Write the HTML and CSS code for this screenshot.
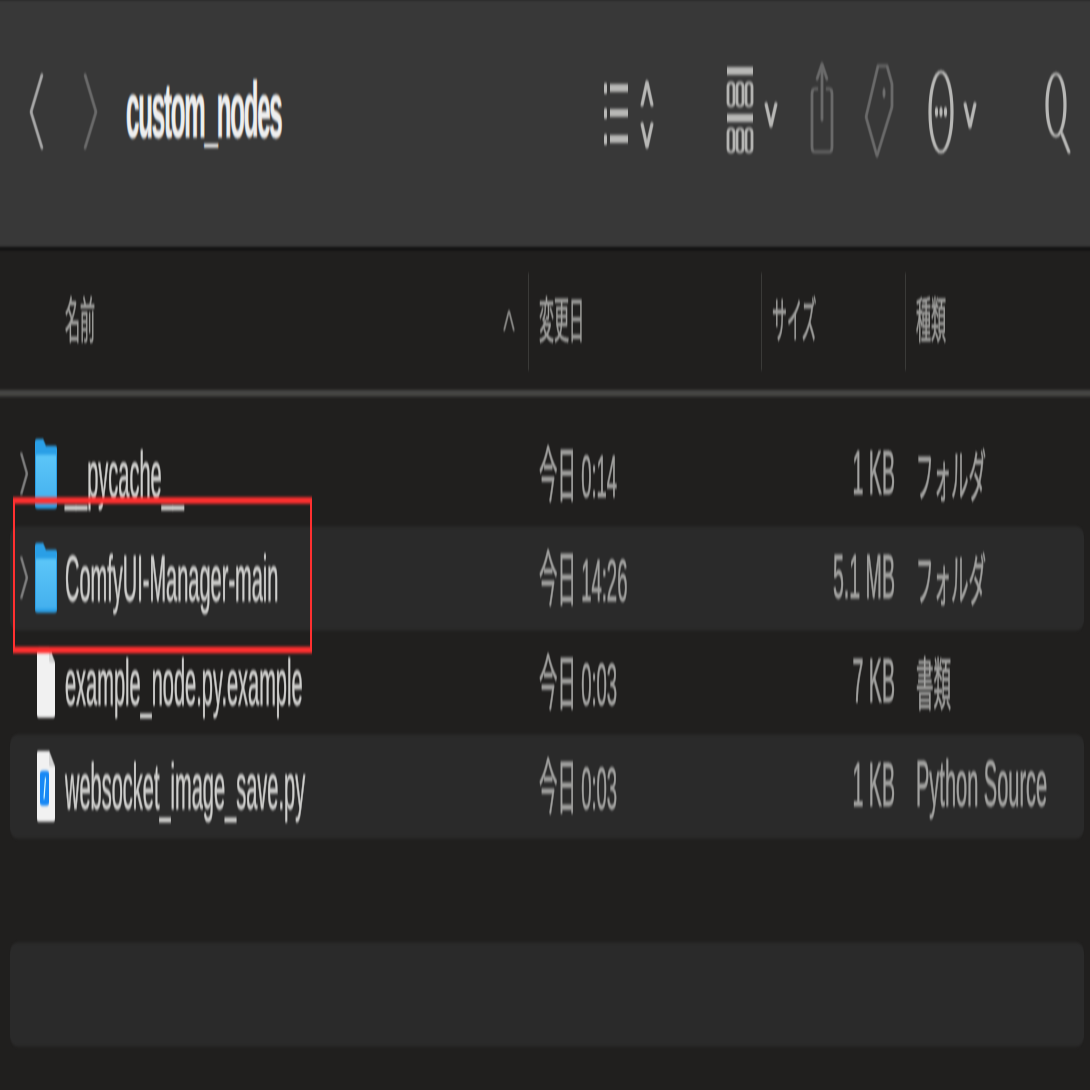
FILE: index.html
```html
<!DOCTYPE html>
<html lang="ja">
<head>
<meta charset="utf-8">
<title>custom_nodes</title>
<link rel="stylesheet" href="styles.css">
</head>
<body>
<main class="stage">
  <header class="toolbar">
    <svg class="tb tb-nav" viewBox="24 0 80 249" preserveAspectRatio="none"><polyline class="s-mid" points="42,75 31,112 42,148"/><polyline class="s-dim" points="85,75 96,112 85,148"/></svg>
    <h1 class="title">custom_nodes</h1>
    <svg class="tb tb-list" viewBox="602 0 54 249" preserveAspectRatio="none">
      <g class="f-light"><rect x="604" y="83" width="3" height="11" rx="1.5"/><rect x="604" y="108" width="3" height="11" rx="1.5"/><rect x="604" y="134" width="3" height="11" rx="1.5"/><rect x="610" y="84" width="18" height="8"/><rect x="610" y="109" width="18" height="8"/><rect x="610" y="135" width="18" height="8"/></g>
      <polyline class="s-light" points="642,105 647,82 652,105"/><polyline class="s-light" points="642,124 647,147 652,124"/>
    </svg>
    <svg class="tb tb-gallery" viewBox="724 0 56 249" preserveAspectRatio="none">
      <g class="f-light"><rect x="727" y="67" width="26" height="8"/><rect x="727" y="114" width="26" height="8"/></g>
      <g class="s-thin"><rect x="728" y="83" width="6" height="23" rx="3"/><rect x="737" y="83" width="6" height="23" rx="3"/><rect x="746" y="83" width="6" height="23" rx="3"/><rect x="728" y="129" width="6" height="23" rx="3"/><rect x="737" y="129" width="6" height="23" rx="3"/><rect x="746" y="129" width="6" height="23" rx="3"/></g>
      <polyline class="s-light" points="766,104 771,126 776,104"/>
    </svg>
    <svg class="tb tb-share" viewBox="808 0 28 249" preserveAspectRatio="none"><path class="s-dim" d="M817 89h-2q-3 0-3 5v53q0 5 3 5h14q3 0 3-5V94q0-5-3-5h-2"/><path class="s-dim" d="M822 120V64M817 79l5-15 5 15"/></svg>
    <svg class="tb tb-tag" viewBox="862 0 34 249" preserveAspectRatio="none"><path class="s-dim" d="M878 66h9l5 18v23l-15 49-11-39z"/><ellipse class="f-dim" cx="884" cy="93" rx="1.5" ry="5"/></svg>
    <svg class="tb tb-more" viewBox="926 0 54 249" preserveAspectRatio="none">
      <ellipse class="s-light" cx="941" cy="112" rx="11" ry="40"/>
      <g class="f-light"><ellipse cx="936.5" cy="112" rx="1.6" ry="5"/><ellipse cx="941" cy="112" rx="1.6" ry="5"/><ellipse cx="945.5" cy="112" rx="1.6" ry="5"/></g>
      <polyline class="s-light" points="965,104 970,127 975,104"/>
    </svg>
    <svg class="tb tb-search" viewBox="1042 0 30 249" preserveAspectRatio="none"><ellipse class="s-light" cx="1056" cy="105" rx="9" ry="31"/><path class="s-light" d="M1062 134l7 18"/></svg>
  </header>

  <div class="columns">
    <div class="col col-name"><span class="label">名前</span><svg class="sort" viewBox="0 0 12 24" preserveAspectRatio="none"><polyline points="1,22 6,2 11,22"/></svg></div>
    <div class="col col-date"><span class="label">変更日</span></div>
    <div class="col col-size"><span class="label">サイズ</span></div>
    <div class="col col-kind"><span class="label">種類</span></div>
  </div>

  <section class="list">
    <div class="row">
      <svg class="disc" viewBox="0 0 8 44" preserveAspectRatio="none"><polyline points="1,1 7,22 1,43"/></svg>
      <svg class="folder" viewBox="0 0 22 70" preserveAspectRatio="none"><use href="#folder-icon"/></svg>
      <span class="name">__pycache__</span><span class="date">今日 0:14</span><span class="size">1 KB</span><span class="kind jp">フォルダ</span>
    </div>
    <div class="row stripe">
      <svg class="disc" viewBox="0 0 8 44" preserveAspectRatio="none"><polyline points="1,1 7,22 1,43"/></svg>
      <svg class="folder" viewBox="0 0 22 70" preserveAspectRatio="none"><use href="#folder-icon"/></svg>
      <span class="name">ComfyUI-Manager-main</span><span class="date">今日 14:26</span><span class="size">5.1 MB</span><span class="kind jp">フォルダ</span>
    </div>
    <div class="row">
      <i></i>
      <svg class="file" viewBox="0 0 20 72" preserveAspectRatio="none"><use href="#file-icon"/></svg>
      <span class="name">example_node.py.example</span><span class="date">今日 0:03</span><span class="size">7 KB</span><span class="kind jp">書類</span>
    </div>
    <div class="row stripe">
      <i></i>
      <svg class="file" viewBox="0 0 20 72" preserveAspectRatio="none"><use href="#file-icon"/><rect x="4" y="20" width="9" height="35" rx="3" fill="#1788f5"/><path d="M9.5 27l-1.5 21" stroke="#dff" stroke-width="1.2"/></svg>
      <span class="name">websocket_image_save.py</span><span class="date">今日 0:03</span><span class="size">1 KB</span><span class="kind">Python Source</span>
    </div>
    <div class="row"></div>
    <div class="row stripe"></div>
  </section>

  <div class="callout"></div>

  <svg class="defs" aria-hidden="true">
    <defs>
      <linearGradient id="folder-fill" x1="0" y1="0" x2="0" y2="1"><stop offset="0" stop-color="#5cc6f8"/><stop offset="1" stop-color="#44b0ee"/></linearGradient>
      <g id="folder-icon">
        <path d="M0 3q0-3 3-3h5l3 7h9q2 0 2 3v57q0 3-3 3H3q-3 0-3-3z" fill="#2a9fe6"/>
        <rect x="1" y="16" width="20" height="50" rx="1" fill="url(#folder-fill)"/>
      </g>
      <g id="file-icon">
        <path d="M1 2q0-2 2-2h10l6 16v52q0 3-2 3H3q-2 0-2-3z" fill="#f1f1f1"/>
        <path d="M13 0v14q0 2 2 2h4z" fill="#d4d4d4"/>
      </g>
    </defs>
  </svg>
</main>
</body>
</html>
```
FILE: styles.css
```css
html, body { margin: 0; height: 100%; overflow: hidden; background: #201f1e; }
body { font-family: "Liberation Sans", "Noto Sans CJK JP", sans-serif; }

/* The source picture is stretched vertically: everything is laid out
   at 1/3.25 height and stretched back up. */
.stage {
  position: relative;
  width: 1090px;
  height: 336px;
  transform: scale(1, 3.25);
  transform-origin: 0 0;
  color: #cfcfcf;
  font-size: 20px;
  filter: blur(0.45px);
  -webkit-text-stroke: 0.25px currentColor;
}

.toolbar {
  display: flex;
  align-items: center;
  height: 76px;
  padding-left: 24px;
  background: #383838;
  border-bottom: 1px solid #0c0c0c;
}
.tb { height: 76.6px; flex: none; align-self: flex-start; overflow: visible; }
.tb-nav { width: 80px; }
.tb-list { width: 54px; margin-left: 202px; }
.tb-gallery { width: 56px; margin-left: 68px; }
.tb-share { width: 28px; margin-left: 28px; }
.tb-tag { width: 34px; margin-left: 26px; }
.tb-more { width: 54px; margin-left: 30px; }
.tb-search { width: 30px; margin-left: 62px; }

.title {
  width: 274px;
  margin: 0 0 8px 22px;
  font-size: 24px;
  font-weight: 700;
  letter-spacing: -1.15px;
  color: #eeeeee;
  flex: none;
}

.s-light, .s-mid, .s-dim, .s-thin { fill: none; stroke-linecap: round; stroke-linejoin: round; }
.s-light { stroke: #b8b8b6; stroke-width: 3.2; }
.s-mid { stroke: #a8a8a8; stroke-width: 2.8; }
.s-dim { stroke: #6a6a6a; stroke-width: 2.8; }
.s-thin { stroke: #b4b4b2; stroke-width: 2.8; }
.f-light { fill: #b8b8b6; }
.f-dim { fill: #6e6e6e; }

.columns {
  display: flex;
  align-items: center;
  height: 45px;
  box-sizing: border-box;
  border-bottom: 2px solid #464644;
  color: #a0a09e;
  font-size: 15px;
}
.col {
  display: flex;
  align-items: center;
  height: 30px;
  box-sizing: border-box;
  padding-left: 10px;
  border-left: 1px solid #3a3a38;
}
.col-name { width: 528px; padding: 0 13px 0 65px; border-left: 0; justify-content: space-between; }
.col-date { width: 233px; }
.col-size { width: 144px; }
.col-kind { flex: 1; }
.label { margin-top: -2px; }
.sort { width: 12px; height: 7.4px; overflow: visible; }
.sort polyline { fill: none; stroke: #8c8c8a; stroke-width: 1.8; }

.list { padding-top: 8px; }
.row {
  display: grid;
  grid-template-columns: 25px 30px 474px 233px 123px auto;
  align-items: center;
  height: 32px;
  margin: 0 6px 0 10px;
  border-radius: 8px / 3px;
}
.row.stripe { background: #2a2a2a; }
.disc { width: 8px; height: 13.5px; margin-left: 10px; overflow: visible; }
.disc polyline { fill: none; stroke: #808080; stroke-width: 2.4; }
.folder { width: 22px; height: 21.5px; }
.file { width: 20px; height: 22.2px; margin-left: 1px; }
.name { color: #cfcfcd; white-space: nowrap; }
.date, .size, .kind { color: #a2a2a0; white-space: nowrap; margin-top: -1px; }
.date { font-size: 18.5px; margin-top: -3px; }
.size { text-align: right; font-size: 19.6px; }
.kind { padding-left: 21px; }
.kind.jp { font-size: 17.5px; }

.callout {
  position: absolute;
  left: 13px;
  top: 152.6px;
  width: 299px;
  height: 48px;
  box-sizing: border-box;
  border: 2px solid #ff3030;
}
.defs { position: absolute; width: 0; height: 0; }
```
